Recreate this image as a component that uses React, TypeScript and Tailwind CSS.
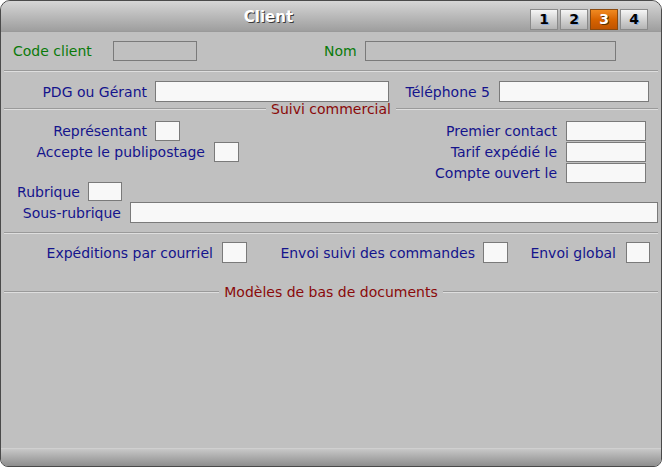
const font = { fontFamily: '"DejaVu Sans", Verdana, sans-serif' }

function Box({ w, h = 20, disabled = false }: { w: number; h?: number; disabled?: boolean }) {
  return (
    <div
      className={`shrink-0 border border-[#7a7a7a] ${disabled ? "bg-[#c0c0c0]" : "bg-[#f8f8f8]"}`}
      style={{ width: w, height: h }}
    />
  )
}

function Label({ text, w, green = false, right = true }: { text: string; w: number; green?: boolean; right?: boolean }) {
  return (
    <span
      className={`shrink-0 whitespace-nowrap text-[14px] leading-[20px] ${green ? "text-[#0a7a0a]" : "text-[#14148c]"} ${right ? "text-right" : ""}`}
      style={{ width: w }}
    >
      {text}
    </span>
  )
}

function Separator() {
  return (
    <div className="mx-[3px] h-[2px] border-t border-[#9a9a9a] border-b border-b-[#dedede]" />
  )
}

function Section({ title }: { title: string }) {
  return (
    <div className="mx-[3px] flex h-[16px] items-center">
      <div className="h-[2px] flex-1 border-t border-[#9a9a9a] border-b border-b-[#dedede]" />
      <span className="px-[5px] text-[14px] leading-[16px] text-[#8a0a0a]">{title}</span>
      <div className="h-[2px] flex-1 border-t border-[#9a9a9a] border-b border-b-[#dedede]" />
    </div>
  )
}

const tabs = ["1", "2", "3", "4"]

export default function App() {
  return (
    <div className="h-[467px] w-[662px] bg-white" style={font}>
      <div className="flex h-full w-full flex-col overflow-hidden rounded-t-[10px] rounded-b-[8px] border border-[#4a4a4a] bg-[#c0c0c0]">
        {/* title bar */}
        <div className="flex h-[31px] shrink-0 items-start border-b border-[#9a9a9a] bg-gradient-to-b from-[#d6d6d6] to-[#9e9e9e]">
          <div className="flex flex-1 justify-center pl-[6px] pt-[6px]">
            <span className="text-[15px] font-bold leading-[20px] text-white [text-shadow:1px_1px_0_#3a3a3a]">Client</span>
          </div>
          <div className="mr-[13px] flex gap-[2px] pt-[8px]">
            {tabs.map((t) => (
              <div
                key={t}
                className={`flex h-[21px] w-[28px] items-center justify-center border text-[14px] font-bold ${
                  t === "3"
                    ? "border-[#8a4a10] bg-gradient-to-b from-[#f08a20] via-[#d86400] to-[#c05400] text-white [text-shadow:1px_1px_0_#5a3000]"
                    : "border-[#8a8a8a] bg-gradient-to-b from-[#f6f6f6] via-[#d4d4d4] to-[#b4b4b4] text-black [text-shadow:1px_1px_0_#88aadd]"
                }`}
              >
                {t}
              </div>
            ))}
          </div>
        </div>

        {/* Code client / Nom */}
        <div className="mt-[9px] flex items-center pl-[12px]">
          <Label text="Code client" w={100} green right={false} />
          <Box w={84} disabled />
          <div className="w-[127px]" />
          <Label text="Nom" w={41} green right={false} />
          <Box w={251} disabled />
        </div>

        <div className="mt-[9px]">
          <Separator />
        </div>

        {/* PDG / Téléphone */}
        <div className="mt-[9px] flex items-center">
          <Label text="PDG ou Gérant" w={146} />
          <div className="w-[8px]" />
          <Box w={234} h={21} />
          <Label text="Téléphone 5" w={101} />
          <div className="w-[9px]" />
          <Box w={150} h={21} />
        </div>

        <div className="-mt-[1px]">
          <Section title="Suivi commercial" />
        </div>

        {/* Suivi commercial */}
        <div className="mt-[4px] flex h-[61px] justify-between pr-[15px]">
          <div className="flex flex-col gap-px">
            <div className="flex items-center">
              <Label text="Représentant" w={146} />
              <div className="w-[8px]" />
              <Box w={25} />
            </div>
            <div className="flex items-center">
              <Label text="Accepte le publipostage" w={204} />
              <div className="w-[9px]" />
              <Box w={25} h={20} />
            </div>
          </div>
          <div className="flex flex-col gap-px">
            {["Premier contact", "Tarif expédié le", "Compte ouvert le"].map((l) => (
              <div key={l} className="flex h-[20px] items-center">
                <Label text={l} w={160} />
                <div className="w-[9px]" />
                <Box w={80} h={20} />
              </div>
            ))}
          </div>
        </div>

        <div className="flex h-[19px] items-center">
          <Label text="Rubrique" w={79} />
          <div className="w-[8px]" />
          <Box w={34} h={19} />
        </div>
        <div className="mt-px flex items-center">
          <Label text="Sous-rubrique" w={120} />
          <div className="w-[9px]" />
          <Box w={528} h={21} />
        </div>

        <div className="mt-[9px]">
          <Separator />
        </div>

        {/* Expéditions */}
        <div className="mt-[8px] flex items-center">
          <Label text="Expéditions par courriel" w={212} />
          <div className="w-[9px]" />
          <Box w={25} h={21} />
          <Label text="Envoi suivi des commandes" w={228} />
          <div className="w-[8px]" />
          <Box w={25} h={21} />
          <Label text="Envoi global" w={108} />
          <div className="w-[10px]" />
          <Box w={24} h={21} />
        </div>

        <div className="mt-[21px]">
          <Section title="Modèles de bas de documents" />
        </div>

        <div className="flex-1" />

        {/* bottom bar */}
        <div className="h-[18px] shrink-0 border-t border-[#d0d0d0] bg-gradient-to-b from-[#c8c8c8] to-[#8e8e8e]" />
      </div>
    </div>
  )
}
